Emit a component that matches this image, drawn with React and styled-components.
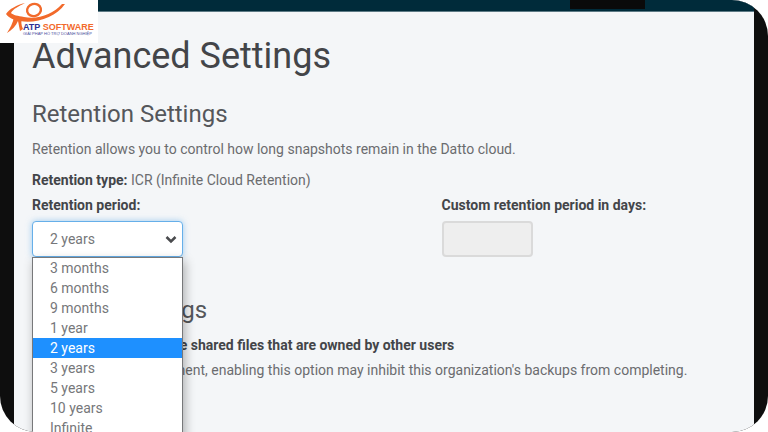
import styled, { createGlobalStyle } from 'styled-components';
import { useState } from 'react';

const GlobalStyle = createGlobalStyle`
  * {
    box-sizing: border-box;
  }

  body {
    margin: 0;
    background: #fff;
    color: #6b6c6f;
    font-family: Roboto, 'Liberation Sans', sans-serif;
    font-size: 14px;
    line-height: 20px;
  }
`;

const Frame = styled.div`
  display: flex;
  min-height: 100vh;
  padding: 0 14px;
  border-radius: 36px;
  background: #0e0e0e;
  overflow: hidden;
`;

const Page = styled.div`
  flex: 1;
  background: #f4f6f8;
`;

const TopBar = styled.header`
  display: flex;
  justify-content: flex-end;
  height: 12px;
  padding: 0 109px 2px 0;
  border-bottom: 1px solid #5d7a85;
  background: #002b3a;
`;

const ActiveTab = styled.div`
  width: 75px;
  background: #0a0a0a;
`;

const Content = styled.main`
  padding: 22px 20px 22px 18px;
`;

const Title = styled.h1`
  margin: 0 0 21px;
  color: #434549;
  font-size: 36px;
  font-weight: 400;
  line-height: 44px;
`;

const SectionTitle = styled.h2`
  margin: 0 0 10px;
  color: #55575b;
  font-size: 24px;
  font-weight: 400;
  line-height: 30px;
`;

const Text = styled.p`
  margin: 0 0 ${({ $gap }) => $gap || 0}px;
`;

const Strong = styled.strong`
  color: #434549;
  font-weight: 700;
`;

const Fields = styled.div`
  display: grid;
  grid-template-columns: 7fr 5fr;
  margin-bottom: 38px;
`;

const Field = styled.div`
  display: flex;
  flex-direction: column;
  align-items: flex-start;
  gap: 6px;
`;

const Label = styled.label`
  color: #434549;
  font-weight: 700;
`;

const SelectBox = styled.div`
  position: relative;
  width: 151px;
`;

const Select = styled.select`
  display: block;
  width: 100%;
  height: 36px;
  padding: 0 17px;
  border: 1px solid #66afe9;
  border-radius: 4px;
  background: #fff;
  box-shadow: 0 0 6px rgba(102, 175, 233, 0.6);
  color: #76777a;
  font: inherit;
  appearance: none;
  outline: none;
`;

const Chevron = styled.svg`
  position: absolute;
  top: 14px;
  right: 6px;
  width: 12px;
  height: 9px;
  pointer-events: none;
`;

const Options = styled.ul`
  position: absolute;
  top: 36px;
  left: 0;
  z-index: 1;
  width: 100%;
  margin: 0;
  padding: 0;
  border: 1px solid #77787a;
  background: #fff;
  box-shadow: 2px 4px 10px rgba(0, 0, 0, 0.3);
  list-style-type: none;
`;

const Option = styled.li`
  padding: 0 17px;
  background: ${({ $selected }) => ($selected ? '#1e90ff' : '#fff')};
  color: ${({ $selected }) => ($selected ? '#fff' : '#76777a')};
  cursor: pointer;
`;

const DaysInput = styled.input`
  width: 91px;
  height: 36px;
  padding: 0 12px;
  border: 2px solid #dadada;
  border-radius: 4px;
  background: #eee;
  font: inherit;
`;

const LogoBox = styled.div`
  position: absolute;
  top: 0;
  left: 0;
  z-index: 2;
  width: 98px;
  height: 43px;
  background: #fff;
`;

const periods = [
  '3 months',
  '6 months',
  '9 months',
  '1 year',
  '2 years',
  '3 years',
  '5 years',
  '10 years',
  'Infinite',
];

function Logo() {
  return (
    <LogoBox>
      <svg width="98" height="43" viewBox="0 0 98 43" role="img" aria-label="ATP Software">
        <g fill="#f26a2b">
          <ellipse cx="34" cy="10" rx="7" ry="6" fill="none" stroke="#f26a2b" strokeWidth="2.4" transform="rotate(-15 34 10)" />
          <path d="M25 3C17 5 9 9 6 14C9 18 14 20 20 21C36 24 56 17 65 4L62 4C53 14 38 20 24 17C18 16 13 15 11 13C13 9 19 6 25 3Z" />
          <path d="M14 17C13 23 10 28 7 33C12 30 16 26 18 21L20 31L23 29C21 25 21 21 22 18Z" />
        </g>
        <text x="23" y="30" fill="#2e3192" fontFamily="Liberation Sans, sans-serif" fontSize="9" fontWeight="700">
          ATP <tspan fill="#f26a2b">SOFTWARE</tspan>
        </text>
        <text x="23" y="35" fill="#4a4c9c" fontFamily="Liberation Sans, sans-serif" fontSize="4">
          GIẢI PHÁP HỖ TRỢ DOANH NGHIỆP
        </text>
      </svg>
    </LogoBox>
  );
}

export default function App() {
  const [period, setPeriod] = useState('2 years');

  return (
    <>
      <GlobalStyle />
      <Logo />
      <Frame>
        <Page>
          <TopBar>
            <ActiveTab />
          </TopBar>
          <Content>
            <Title>Advanced Settings</Title>
            <SectionTitle>Retention Settings</SectionTitle>
            <Text $gap={11}>
              Retention allows you to control how long snapshots remain in the Datto cloud.
            </Text>
            <Text $gap={5}>
              <Strong>Retention type:</Strong> ICR (Infinite Cloud Retention)
            </Text>
            <Fields>
              <Field>
                <Label htmlFor="period">Retention period:</Label>
                <SelectBox>
                  <Select id="period" value={period} onChange={(e) => setPeriod(e.target.value)}>
                    {periods.map((item) => (
                      <option key={item}>{item}</option>
                    ))}
                  </Select>
                  <Chevron viewBox="0 0 12 9">
                    <path d="M1.5 2L6 6.5L10.5 2" fill="none" stroke="#4a4b4e" strokeWidth="2.5" />
                  </Chevron>
                  <Options role="listbox" aria-label="Retention period">
                    {periods.map((item) => (
                      <Option
                        key={item}
                        role="option"
                        aria-selected={item === period}
                        $selected={item === period}
                        onClick={() => setPeriod(item)}
                      >
                        {item}
                      </Option>
                    ))}
                  </Options>
                </SelectBox>
              </Field>
              <Field>
                <Label htmlFor="days">Custom retention period in days:</Label>
                <DaysInput id="days" type="text" disabled />
              </Field>
            </Fields>
            <SectionTitle>General Settings</SectionTitle>
            <Text $gap={5}>
              <Strong>Enable backup for all the shared files that are owned by other users</Strong>
            </Text>
            <Text>
              On a very large environment, enabling this option may inhibit this organization's backups from completing.
            </Text>
          </Content>
        </Page>
      </Frame>
    </>
  );
}
